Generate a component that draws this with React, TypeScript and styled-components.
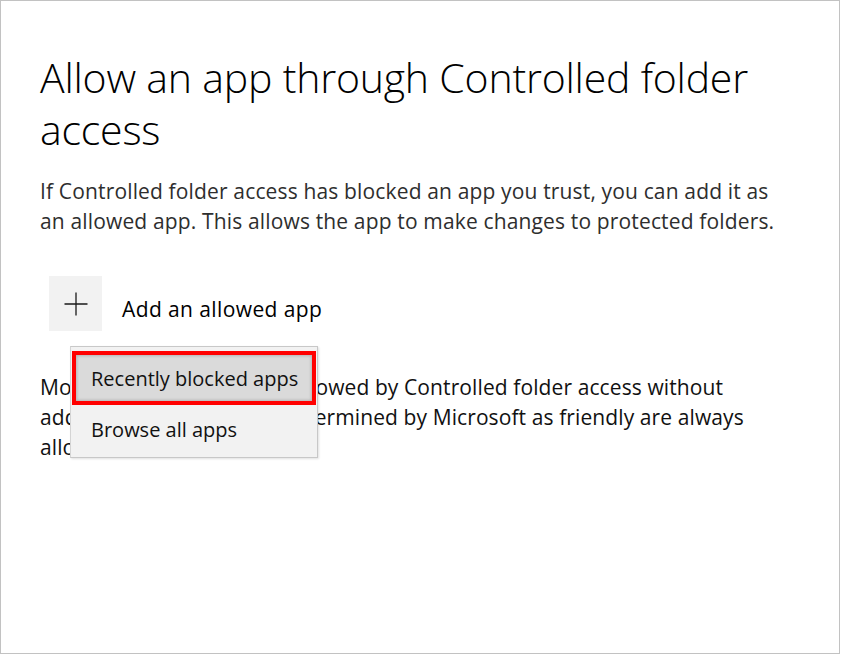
import React from "react";
import { styled, createGlobalStyle } from "styled-components";

const GlobalStyle = createGlobalStyle`
  html, body {
    margin: 0;
    padding: 0;
    background: #ffffff;
  }
  * {
    box-sizing: border-box;
  }
`;

const FONT = `"Open Sans", "Noto Sans", "Liberation Sans", sans-serif`;

const App = () => {
  return (
    <>
      <GlobalStyle />
      <StPage>
        <StTitle>Allow an app through Controlled folder access</StTitle>
        <StDescription>
          If Controlled folder access has blocked an app you trust, you can add it as
          <br />
          an allowed app. This allows the app to make changes to protected folders.
        </StDescription>
        <StAddRow>
          <StAddButton type="button" aria-label="Add an allowed app">
            <svg width="24" height="24" viewBox="0 0 24 24">
              <path d="M12 0.5V23.5M0.5 12H23.5" stroke="#1a1a1a" strokeWidth="1.3" />
            </svg>
          </StAddButton>
          <StAddLabel>Add an allowed app</StAddLabel>
          <StMenu>
            <StMenuItem $active>Recently blocked apps</StMenuItem>
            <StMenuItem>Browse all apps</StMenuItem>
          </StMenu>
        </StAddRow>
        <StNote>
          Most of your apps will be allowed by Controlled folder access without
          <br />
          adding them here. Apps determined by Microsoft as friendly are always
          <br />
          allowed.
        </StNote>
      </StPage>
    </>
  );
};

const StPage = styled.div`
  width: 840px;
  height: 654px;
  border: 1px solid #c2c2c2;
  padding: 50px 20px 0 39px;
  font-family: ${FONT};
  color: #000;
  overflow: hidden;
`;

const StTitle = styled.h1`
  margin: 0;
  width: 760px;
  font-size: 41px;
  font-weight: 300;
  line-height: 52px;
  letter-spacing: -0.2px;
`;

const StDescription = styled.p`
  margin: 21px 0 0;
  white-space: nowrap;
  font-size: 21px;
  line-height: 30px;
  color: #2e2e2e;
  letter-spacing: 0.15px;
`;

const StAddRow = styled.div`
  position: relative;
  display: flex;
  align-items: center;
  gap: 20px;
  margin: 40px 0 0 9px;
`;

const StAddButton = styled.button`
  width: 53px;
  height: 55px;
  display: flex;
  align-items: center;
  justify-content: center;
  border: none;
  background: #f2f2f2;
  padding: 0;
`;

const StAddLabel = styled.span`
  margin-top: 10px;
  font-size: 21px;
  color: #000;
  letter-spacing: 0.4px;
`;

const StMenu = styled.div`
  position: absolute;
  left: 21px;
  top: 70px;
  width: 248px;
  height: 112px;
  padding: 4px 1px 0 1px;
  background: #f2f2f2;
  border: 1px solid #c8c8c8;
  border-left-color: #d4d4d4;
  box-shadow: 1px 1px 2px rgba(0, 0, 0, 0.12);
  z-index: 2;
`;

const StMenuItem = styled.div<{ $active?: boolean }>`
  height: ${({ $active }) => ($active ? "54px" : "48px")};
  display: flex;
  align-items: center;
  padding-left: ${({ $active }) => ($active ? "15px" : "19px")};
  font-size: 20px;
  color: #111;
  background: ${({ $active }) => ($active ? "#dadada" : "transparent")};
  border: ${({ $active }) => ($active ? "4px solid #ff0000" : "none")};
  box-shadow: ${({ $active }) =>
    $active ? "inset 0 0 3px 1px rgba(0, 0, 0, 0.18)" : "none"};
`;

const StNote = styled.p`
  margin: 41px 0 0;
  white-space: nowrap;
  font-size: 21px;
  line-height: 30px;
  color: #111;
  letter-spacing: 0.1px;
`;

export default App;
